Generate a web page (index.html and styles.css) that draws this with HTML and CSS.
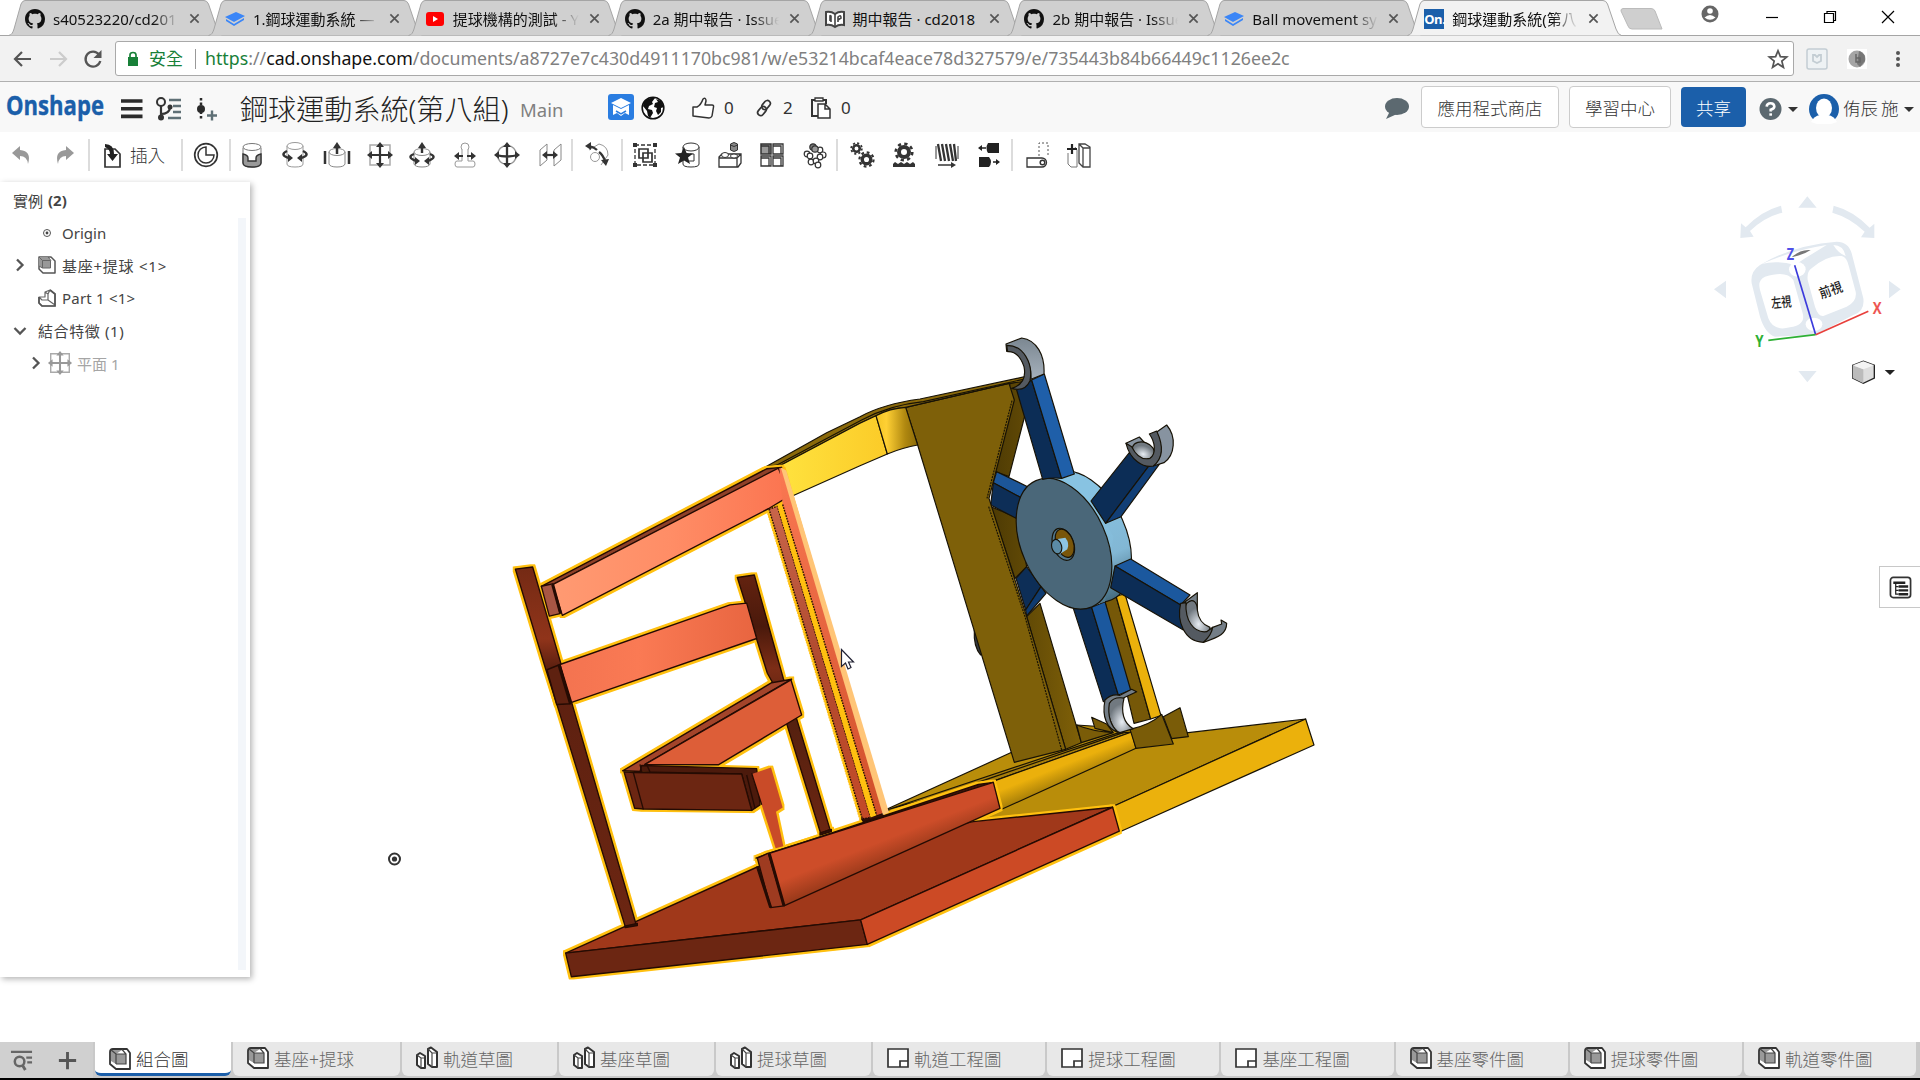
FILE: index.html
```html
<!DOCTYPE html>
<html lang="zh-Hant">
<head>
<meta charset="utf-8">
<title>鋼球運動系統(第八組)</title>
<link rel="stylesheet" href="styles.css">
</head>
<body>
<svg class="defs" width="0" height="0">
  <defs>
    <symbol id="tab-shape" viewBox="0 0 215 36"><path d="M.5 35.5C4 35 5 32 6 29L13 4Q14.500 .5 17 .5H196Q199 .5 200.500 4L209 29Q211 35 214.500 35.500"/></symbol>
    <symbol id="github" viewBox="0 0 16 16"><path d="M8 0C3.580 0 0 3.580 0 8c0 3.540 2.290 6.530 5.470 7.590.4.070.55-.17.55-.38 0-.19-.01-.82-.01-1.490-2.010.37-2.530-.49-2.690-.94-.09-.23-.48-.94-.82-1.130-.28-.15-.68-.52-.01-.53.63-.01 1.080.58 1.230.82.72 1.210 1.870.87 2.330.66.070-.52.28-.87.51-1.070-1.780-.2-3.640-.89-3.640-3.950 0-.87.31-1.590.82-2.150-.08-.2-.36-1.020.080-2.120 0 0 .67-.21 2.200.82.64-.18 1.320-.27 2-.27.68 0 1.360.09 2 .27 1.530-1.040 2.200-.82 2.200-.82.44 1.100.16 1.920.08 2.120.51.56.82 1.270.82 2.150 0 3.070-1.870 3.750-3.650 3.950.29.25.54.73.54 1.480 0 1.070-.01 1.930-.01 2.200 0 .21.15.46.55.38A8.013 8.013 0 0016 8c0-4.420-3.580-8-8-8z"/></symbol>
    <symbol id="stack" viewBox="0 0 20 20"><path d="M0 8 11 3 20 7 9 13Z" fill="#3b86f7"/><path d="M1 10v2l8 5 10-6V9L9 15Z" fill="#3b86f7"/></symbol>
    <symbol id="youtube" viewBox="0 0 20 20"><rect x="1" y="3" width="18" height="14" rx="3" fill="#f00"/><path d="M8 7v6l5-3Z" fill="#fff"/></symbol>
    <symbol id="book" viewBox="0 0 20 20"><path d="M1 3Q6 2 10 5 14 2 19 3V16Q14 15 10 18 6 15 1 16Z" fill="#fff" stroke="#444" stroke-width="2"/><path d="M10 5V17M5 12V7Q5 6 6 7V13M13 13V8Q16 5 16 9L13 11" fill="none" stroke="#444" stroke-width="1.600"/></symbol>
    <symbol id="close" viewBox="0 0 12 12"><path d="M1.500 1.500 10.500 10.500M10.500 1.500 1.500 10.500" stroke="#555" stroke-width="1.800"/></symbol>
    <symbol id="part" viewBox="0 0 24 24"><path d="M2 5Q2 2 5 2H19L22 6V22H8L2 17Z" fill="#fff" stroke="#333" stroke-width="1.800" stroke-linejoin="round"/><path d="M8 7H18V17H8L3 14V3H14Z" fill="#999"/><path d="M2.500 2.500 8 7H18M8 7V17M14 2.500 18 7V17H8" fill="none" stroke="#444" stroke-width="1.200"/></symbol>
    <symbol id="part-small" viewBox="0 0 20 20"><path d="M2 2V14L6 18H18V6L14 2H2Z" fill="#fff" stroke="#555" stroke-width="1.500" stroke-linejoin="round"/><path d="M2 2H11L14 5.500V13H5.500L2 11Z" fill="#999"/><path d="M2 2 5.500 5.500H13.500V13H5.500L2 11M5.500 5.500V13M11 2 14 5.500" fill="none" stroke="#666"/></symbol>
    <symbol id="sketch" viewBox="0 0 24 24"><path d="M2 9 5 7 10 10V22H6L2 19ZM13 3 16 1.500 22 6V21H17L13 18Z" fill="#fff" stroke="#333" stroke-width="2" stroke-linejoin="round"/><path d="M2 9 6 12H10M6 12V22M13 3 17 7H22M17 7V21" fill="none" stroke="#444" stroke-width="1.200"/></symbol>
    <symbol id="drawing" viewBox="0 0 24 24"><path d="M2 3H22V21H2Z" fill="#fff" stroke="#333" stroke-width="1.700"/><path d="M14 21V15H22" fill="none" stroke="#333" stroke-width="1.700"/></symbol>
    <symbol id="planar" viewBox="0 0 28 28"><path d="M4 4H24V24H4Z" fill="none" stroke="#aaa" stroke-width="1.500"/><path d="M14 3V25M3 14H25" stroke="currentColor" stroke-width="2.200"/><path d="M14 1 18 6H10ZM14 27 18 22H10ZM1 14 6 10V18ZM27 14 22 10V18Z" fill="currentColor"/></symbol>
    <symbol id="gear" viewBox="0 0 20 20"><circle cx="10" cy="10" r="5" fill="none" stroke="#333" stroke-width="4"/><circle cx="10" cy="10" r="8.300" fill="none" stroke="#333" stroke-width="2.600" stroke-dasharray="3.260"/></symbol>
  </defs>
</svg>

<header class="tabstrip">
  <div class="tab"><svg class="shape"><use href="#tab-shape"/></svg><svg class="fav"><use href="#github"/></svg><span class="tab-title">s40523220/cd201</span><svg class="x"><use href="#close"/></svg></div>
  <div class="tab"><svg class="shape"><use href="#tab-shape"/></svg><svg class="fav"><use href="#stack"/></svg><span class="tab-title">1.鋼球運動系統 —</span><svg class="x"><use href="#close"/></svg></div>
  <div class="tab"><svg class="shape"><use href="#tab-shape"/></svg><svg class="fav"><use href="#youtube"/></svg><span class="tab-title">提球機構的測試 - Y</span><svg class="x"><use href="#close"/></svg></div>
  <div class="tab"><svg class="shape"><use href="#tab-shape"/></svg><svg class="fav"><use href="#github"/></svg><span class="tab-title">2a 期中報告 · Issue</span><svg class="x"><use href="#close"/></svg></div>
  <div class="tab"><svg class="shape"><use href="#tab-shape"/></svg><svg class="fav"><use href="#book"/></svg><span class="tab-title whole">期中報告 · cd2018</span><svg class="x"><use href="#close"/></svg></div>
  <div class="tab"><svg class="shape"><use href="#tab-shape"/></svg><svg class="fav"><use href="#github"/></svg><span class="tab-title">2b 期中報告 · Issue</span><svg class="x"><use href="#close"/></svg></div>
  <div class="tab"><svg class="shape"><use href="#tab-shape"/></svg><svg class="fav"><use href="#stack"/></svg><span class="tab-title">Ball movement sy</span><svg class="x"><use href="#close"/></svg></div>
  <div class="tab active"><svg class="shape"><use href="#tab-shape"/></svg><span class="fav on">On.</span><span class="tab-title">鋼球運動系統(第八</span><svg class="x"><use href="#close"/></svg></div>
  <svg class="newtab" viewBox="0 0 44 22"><path d="M3 .5H31Q34 .5 35 3L42 21H12Q9 21 8 18L1 3Q.5 1 3 .5Z" fill="#cfcfcf" stroke="#bbb"/></svg>
  <div class="window-controls">
    <svg class="wc" viewBox="0 0 18 18"><circle cx="9" cy="9" r="8.500" fill="#666"/><circle cx="9" cy="6" r="2.800" fill="#fff"/><path d="M3.500 12.500Q9 7.500 14.500 12.500 9 17 3.500 12.500Z" fill="#fff"/></svg>
    <svg class="wc min" viewBox="0 0 18 18"><path d="M3 9.500H15" stroke="#000" stroke-width="1.200"/></svg>
    <svg class="wc" viewBox="0 0 18 18"><path d="M3.500 5.500H12.500V14.500H3.500ZM6 5.500V3.500H14.500V12.500H12.500" fill="none" stroke="#000" stroke-width="1.200"/></svg>
    <svg class="wc" viewBox="0 0 18 18"><path d="M3 3 15 15M15 3 3 15" stroke="#000" stroke-width="1.200"/></svg>
  </div>
</header>

<nav class="browser-bar">
  <svg class="nav" viewBox="0 0 24 24"><path d="M20 12H5M11 5 4 12 11 19" fill="none" stroke="#555" stroke-width="2.200"/></svg>
  <svg class="nav" viewBox="0 0 24 24"><path d="M4 12H19M13 5 20 12 13 19" fill="none" stroke="#ccc" stroke-width="2.200"/></svg>
  <svg class="nav" viewBox="0 0 24 24"><path d="M18 7.500A7.500 7.500 0 1 0 19.300 14" fill="none" stroke="#555" stroke-width="2.300"/><path d="M20.500 3V11H12.500Z" fill="#555"/></svg>
  <div class="omnibox">
    <svg class="lock" viewBox="0 0 12 16"><path d="M1 6H11V15H1Z" fill="#188038"/><path d="M3 7V4Q3 1.500 6 1.500T9 4V7" fill="none" stroke="#188038" stroke-width="1.700"/></svg>
    <span class="secure">安全</span><i class="omni-sep"></i>
    <span class="url"><b class="scheme">https</b>://<b class="host">cad.onshape.com</b>/documents/a8727e7c430d4911170bc981/w/e53214bcaf4eace78d327579/e/735443b84b66449c1126ee2c</span>
    <svg class="star" viewBox="0 0 24 24"><path d="M12 3 14.600 9.400 21.500 9.900 16.200 14.300 17.900 21 12 17.300 6.100 21 7.800 14.300 2.500 9.900 9.400 9.400Z" fill="none" stroke="#555" stroke-width="1.900"/></svg>
  </div>
  <svg class="ext" viewBox="0 0 22 22"><rect x="1" y="1" width="20" height="20" rx="2" fill="#eef2f4" stroke="#c3cdd3" stroke-width="1.500"/><path d="M7 7H9L11 9 13 7H15V13L11 15 7 13Z" fill="none" stroke="#c3cdd3" stroke-width="1.800"/></svg>
  <svg class="ext second" viewBox="0 0 22 22"><rect x="1" y="1" width="20" height="20" fill="#fff"/><circle cx="11" cy="11" r="8.500" fill="#a5a5a5"/><path d="M13 3Q20 5 19 13L14 19 11 16Z" fill="#777"/><path d="M10 6V14H14V10H10" fill="none" stroke="#666" stroke-width="1.500"/></svg>
  <svg class="dots" viewBox="0 0 6 18"><circle cx="3" cy="3" r="2"/><circle cx="3" cy="9" r="2"/><circle cx="3" cy="15" r="2"/></svg>
</nav>

<section class="doc-header">
  <svg class="logo" viewBox="0 0 100 46"><text x="0" y="31" textLength="98" lengthAdjust="spacingAndGlyphs">Onshape</text></svg>
  <svg class="burger" viewBox="0 0 22 20"><path d="M0 2H21.500M0 9.700H21.500M0 17.400H21.500" stroke="#2b2b2b" stroke-width="3.600"/></svg>
  <svg class="versions" viewBox="0 0 26 24"><circle cx="5" cy="5" r="4" fill="none" stroke="#333" stroke-width="2"/><path d="M5 9V20M5 17Q13 17 14 11" fill="none" stroke="#333" stroke-width="2.200"/><circle cx="14" cy="10" r="2.500" fill="#333"/><circle cx="5" cy="20.500" r="3" fill="#333"/><path d="M13 3H25M17 9H25M17 15H25M12 21H25" stroke="#5f7076" stroke-width="2.400"/></svg>
  <svg class="mark" viewBox="0 0 22 24"><circle cx="5" cy="12" r="4" fill="#2b2b2b"/><path d="M5 1V23" stroke="#2b2b2b" stroke-width="2.500" stroke-dasharray="2.500 2"/><path d="M11 18.500H21M16 13.500V23.500" stroke="#5f7076" stroke-width="2.400"/></svg>
  <h1>鋼球運動系統(第八組)</h1>
  <span class="workspace">Main</span>
  <svg class="edu" viewBox="0 0 26 26"><rect width="26" height="26" rx="3" fill="#2a7de1"/><path d="M13 4 23 9 13 14 3 9Z" fill="#fff"/><path d="M5 11V21L9 19 13 22 17 19 21 21V11L13 15Z" fill="#fff"/><path d="M8 17 13 20 18 17" fill="none" stroke="#2a7de1" stroke-width="1.500"/></svg>
  <svg class="globe" viewBox="0 0 24 24"><circle cx="12" cy="12" r="10.800" fill="#fff" stroke="#111" stroke-width="1.600"/><path d="M3 6Q8 1 14 2L11 6 12 8 8 10 7 13 11 14 12 17 9 22 7 20 6 15 2 10ZM15 3 20 5 23 11 20 12 20 16 17 19 15 15 16 12 13 11 14 7 17 6Z" fill="#111"/></svg>
  <div class="stat"><svg class="i24" viewBox="0 0 24 24"><path d="M2 11H6Q10 9 12 3Q15 1 15 5L14 9H21Q23 9 22.500 11L21 20Q20 22 18 22L10 21 2 20Z" fill="#fff" stroke="#333" stroke-width="1.500" stroke-linejoin="round"/></svg>0</div>
  <div class="stat link"><svg class="i18" viewBox="0 0 18 18"><rect x="8" y="1" width="6" height="10" rx="3" transform="rotate(40 11 6)" fill="none" stroke="#333" stroke-width="1.700"/><rect x="4" y="7" width="6" height="10" rx="3" transform="rotate(40 7 12)" fill="none" stroke="#333" stroke-width="1.700"/></svg>2</div>
  <div class="stat clip"><svg class="i22" viewBox="0 0 22 24"><path d="M8 20H2V4H16V8" fill="none" stroke="#333" stroke-width="2"/><path d="M5 2H13V5H5Z" fill="#fff" stroke="#333" stroke-width="1.300"/><path d="M8 8H15L20 13V22H8ZM15 8V13H20" fill="#fff" stroke="#333" stroke-width="1.500"/></svg>0</div>
  <div class="header-right">
    <svg class="bubble" viewBox="0 0 26 24"><ellipse cx="13" cy="9.500" rx="12" ry="8.500" fill="#5c6970"/><path d="M6 14 2 22 13 17Z" fill="#5c6970"/></svg>
    <button class="btn store">應用程式商店</button>
    <button class="btn learn">學習中心</button>
    <button class="btn share">共享</button>
    <svg class="help" viewBox="0 0 24 24"><circle cx="12" cy="12" r="11.500" fill="#5c6970"/><path d="M8 9.500Q8.300 6 12 6T16 9.300Q16 11.500 12.200 12.800V14.500" fill="none" stroke="#fff" stroke-width="2.700"/><path d="M10.800 16.500H13.600V19H10.800Z" fill="#fff"/></svg>
    <i class="caret"></i>
    <svg class="avatar" viewBox="0 0 30 30"><circle cx="15" cy="15" r="15" fill="#1b5faa"/><ellipse cx="15" cy="14" rx="8" ry="9.500" fill="#fff"/><path d="M2 28Q5 22 11 21H19Q25 22 28 28L22 30H8Z" fill="#fff"/></svg>
    <span class="user">侑辰 施</span><i class="caret"></i>
  </div>
</section>

<section class="toolbar">
  <svg class="tool undo" viewBox="0 0 28 28"><path d="M4 12 12 5V9Q24 10 20 23 19 15 12 15V19Z" fill="#999"/></svg>
  <svg class="tool redo" viewBox="0 0 28 28"><path d="M24 12 16 5V9Q4 10 8 23 9 15 16 15V19Z" fill="#999"/></svg>
  <i class="sep"></i>
  <div class="insert"><svg viewBox="0 0 28 28"><path d="M7 8H17L22 13V26H7Z" fill="#fff" stroke="#333" stroke-width="1.700"/><path d="M7 3Q16 3 16 13H20L14.500 20 9 13H12Q12 8 7 6Z" fill="#222"/></svg>插入</div>
  <i class="sep"></i>
  <svg class="tool clock" viewBox="0 0 28 28"><circle cx="14" cy="14" r="11.300" fill="none" stroke="#333" stroke-width="1.700"/><path d="M14 6A8 8 0 1 0 22 14H14Z" fill="none" stroke="#333" stroke-width="1.500"/></svg>
  <i class="sep"></i>
  <div class="group first">
    <svg class="tool" viewBox="0 0 28 28"><path d="M5 7V22Q5 26 14 26T23 22V7" fill="#fff" stroke="#777"/><path d="M5 13Q10 14 10 17V20H18V17Q18 14 23 13V22Q23 26 14 26T5 22Z" fill="#999" stroke="#333" stroke-width="1.400"/><ellipse cx="14" cy="6" rx="9" ry="3.500" fill="#fff" stroke="#777"/></svg>
    <svg class="tool" viewBox="0 0 28 28"><path d="M6 5V23Q6 26 14 26T22 23V5" fill="#fff" stroke="#999"/><ellipse cx="14" cy="5" rx="8" ry="3.500" fill="#fff" stroke="#999"/><path d="M6 10Q-2 14 8 17M22 10Q30 14 20 17" fill="none" stroke="#333" stroke-width="2.500"/><path d="M7 13 12 17 7 21ZM21 13 16 17 21 21Z" fill="#333"/></svg>
    <svg class="tool" viewBox="0 0 28 28"><path d="M6 11V23Q7 26 14 26T22 23V11" fill="#fff" stroke="#888"/><ellipse cx="14" cy="11" rx="8" ry="3.500" fill="#fff" stroke="#888"/><path d="M2 10V23M26 10V23M14 13V5" stroke="#333" stroke-width="2.500"/><path d="M14 1 18 7H10Z" fill="#333"/></svg>
    <svg class="tool"><use href="#planar"/></svg>
    <svg class="tool" viewBox="0 0 28 28"><path d="M6 11V23Q7 26 14 26T22 23V11" fill="#fff" stroke="#888"/><ellipse cx="14" cy="11" rx="8" ry="3.500" fill="#fff" stroke="#888"/><path d="M14 12V5M6 13Q-2 16 8 20M22 13Q30 16 20 20" fill="none" stroke="#333" stroke-width="2.400"/><path d="M14 1 18 7H10ZM7 16 12 20 7 24ZM21 16 16 20 21 24Z" fill="#333"/></svg>
    <svg class="tool" viewBox="0 0 28 28"><circle cx="14" cy="6" r="4" fill="#fff" stroke="#999"/><path d="M11 9V20H6Q4 20 4 23T6 26H22Q24 26 24 23T22 20H17V9" fill="#fff" stroke="#999"/><path d="M12 15H6M16 15H22" stroke="#333" stroke-width="2.200"/><path d="M3 15 8 11V19ZM25 15 20 11V19Z" fill="#333"/></svg>
    <svg class="tool" viewBox="0 0 28 28"><circle cx="14" cy="14" r="9.500" fill="none" stroke="#999" stroke-width="1.400"/><path d="M14 3V25M3 14Q14 17 25 14" fill="none" stroke="#333" stroke-width="2.300"/><path d="M14 1 18 6H10ZM14 27 18 22H10ZM1 14 6 10V18ZM27 14 22 10V18Z" fill="#333"/></svg>
    <svg class="tool" viewBox="0 0 28 28"><path d="M4 9 11 3V19L4 25ZM18 9 25 3V19L18 25Z" fill="none" stroke="#888"/><path d="M8 14H20" stroke="#333" stroke-width="2.200"/><path d="M6 14 11 10V18ZM22 14 17 10V18Z" fill="#333"/></svg>
  </div>
  <i class="sep"></i>
  <svg class="tool tangent" viewBox="0 0 28 28"><circle cx="12" cy="16" r="4.500" fill="#fff" stroke="#999"/><path d="M6 9 16 3Q25 5 25 14L18 24" fill="none" stroke="#999"/><path d="M6 5Q11 6 14 9M16 11Q20 14 22 20" fill="none" stroke="#333" stroke-width="2.200"/><path d="M2 5 8 1 8 9ZM18 19 26 18 23 25Z" fill="#333"/></svg>
  <i class="sep"></i>
  <div class="group second-group">
    <svg class="tool" viewBox="0 0 28 28"><path d="M4 4H24V24H4Z" fill="none" stroke="#333" stroke-dasharray="4 2" stroke-width="1.300"/><path d="M2 2H6V6H2ZM22 2H26V6H22ZM2 22H6V26H2ZM22 22H26V26H22Z" fill="#333"/><path d="M8 8H17V17H8ZM12 12H21V21H12Z" fill="#fff" stroke="#333" stroke-width="1.700"/></svg>
    <svg class="tool" viewBox="0 0 28 28"><path d="M9 6V23Q9 26 17 26T25 23V6" fill="#fff" stroke="#333"/><ellipse cx="17" cy="6" rx="8" ry="4" fill="#fff" stroke="#333"/><path d="M16 13H20V20H15" fill="none" stroke="#333"/><path d="M10 6 12.600 12 19 12.500 14 16.500 16 23 10 19.500 4 23 6 16.500 1 12.500 7.400 12Z" fill="#222"/></svg>
    <svg class="tool" viewBox="0 0 28 28"><path d="M3 16 6 13H25V22L22 26H3ZM3 17H21V26M21 17 25 13" fill="#fff" stroke="#333" stroke-width="1.300"/><ellipse cx="9" cy="14" rx="3.500" ry="2.500" fill="#fff" stroke="#333"/><ellipse cx="18" cy="15" rx="3.500" ry="2" fill="#fff" stroke="#333"/><path d="M14.500 3Q18 0 21.500 3V9Q18 12 14.500 9Z" fill="#888" stroke="#333"/><path d="M14.500 4Q18 7 21.500 4" fill="none" stroke="#333"/></svg>
    <svg class="tool" viewBox="0 0 28 28"><path d="M3 3H13V13H3Z" fill="#999" stroke="#333" stroke-width="1.500"/><path d="M15 3H25V13H15ZM3 15H13V25H3ZM15 15H25V25H15ZM3 5H11V13M15 5H23V13M3 17H11V25M15 17H23V25" fill="none" stroke="#333" stroke-width="1.300"/></svg>
    <svg class="tool" viewBox="0 0 28 28"><g fill="#fff" stroke="#333" stroke-width="1.200"><circle cx="6" cy="13" r="2.800"/><circle cx="9" cy="15" r="2.800"/><circle cx="19" cy="9" r="2.800"/><circle cx="22" cy="14" r="3"/><circle cx="19" cy="16" r="2.800"/><circle cx="10" cy="21" r="2.800"/><circle cx="15" cy="20" r="2.800"/><circle cx="17" cy="24" r="2.800"/><circle cx="12" cy="6" r="3.200" fill="#777"/><circle cx="14" cy="8" r="3.200" fill="#999"/></g></svg>
  </div>
  <i class="sep"></i>
  <div class="group four">
    <svg class="tool" viewBox="0 0 28 28"><use href="#gear" x="2" y="1" width="13" height="13"/><use href="#gear" x="10" y="10" width="17" height="17"/></svg>
    <svg class="tool" viewBox="0 0 28 28"><use href="#gear" x="4" y="1" width="20" height="20"/><path d="M3 26V23L5 21 8 23 11 21 14 23 17 21 20 23 23 21 25 23V26Z" fill="#333"/></svg>
    <svg class="tool" viewBox="0 0 28 28"><path d="M3 5V18M25 5V18" stroke="#333"/><path d="M5 3 8 20M9 3 12 20M13 3 16 20M17 3 20 20M21 3 23 20" stroke="#333" stroke-width="2.300"/><path d="M5 24H20" stroke="#333" stroke-width="1.500"/><path d="M18 21 23 24 18 27Z" fill="#333"/></svg>
    <svg class="tool" viewBox="0 0 28 28"><path d="M13 2H24V12H13Q10 7 13 2ZM4 16H14Q18 21 14 26H4Z" fill="#222"/><path d="M6 7H11M18 21H22" stroke="#222" stroke-width="1.500"/><path d="M3 7 7 4V10ZM25 21 21 18V24Z" fill="#222"/></svg>
  </div>
  <i class="sep"></i>
  <svg class="tool last" viewBox="0 0 28 28"><path d="M16 15V2H25V16" fill="none" stroke="#555" stroke-dasharray="2 2"/><path d="M4 17H19A4.500 4.500 0 1 1 19 26H4Z" fill="#fff" stroke="#333" stroke-width="1.300"/><circle cx="19.500" cy="21.500" r="2.300" fill="none" stroke="#333" stroke-width="1.500"/></svg>
  <svg class="tool last" viewBox="0 0 28 28"><path d="M3 12V23L6 26H12V9L10 6" fill="#fff" stroke="#777"/><path d="M14 3H20L25 6V26H18L14 22ZM14 3 18 7H25M18 7V26" fill="#fff" stroke="#444" stroke-width="1.300"/><path d="M7 3V13M2 8H12" stroke="#222" stroke-width="2.200"/></svg>
</section>

<main class="workspace-area">
  <aside class="panel">
    <div class="row heading">實例 <b>(2)</b></div>
    <div class="row lvl2"><svg class="origin" viewBox="0 0 10 10"><circle cx="5" cy="5" r="3.500" fill="none" stroke="#555"/><circle cx="5" cy="5" r="1.400" fill="#444"/></svg>Origin</div>
    <div class="row lvl1"><svg class="chev" viewBox="0 0 10 14"><path d="M2 1.500 7.500 7 2 12.500" fill="none" stroke="#555" stroke-width="2.300"/></svg><svg class="node"><use href="#part-small"/></svg><span class="asm">基座+提球 &lt;1&gt;</span></div>
    <div class="row lvl1"><i class="chev"></i><svg class="node" viewBox="0 0 20 20"><path d="M2 9H8V4L13 2 18 6V18H5L2 15ZM2 9 5 12H11L18 17M8 4 11 6V12M11 6 13 2" fill="#fff" stroke="#666" stroke-width="1.200" stroke-linejoin="round"/><path d="M2 9V15L5 18H18V6L13 2" fill="none" stroke="#555" stroke-width="1.700"/></svg><span>Part 1 &lt;1&gt;</span></div>
    <div class="row group-row"><svg class="chev down" viewBox="0 0 14 10"><path d="M1.500 2 7 7.500 12.500 2" fill="none" stroke="#555" stroke-width="2.300"/></svg><span class="asm">結合特徵 (1)</span></div>
    <div class="row mate"><svg class="chev" viewBox="0 0 10 14"><path d="M2 1.500 7.500 7 2 12.500" fill="none" stroke="#555" stroke-width="2.300"/></svg><svg class="mate-icon"><use href="#planar"/></svg>平面 1</div>
    <i class="scroll"></i>
  </aside>

  <svg class="scene" viewBox="250 180 1670 862">
    <defs>
      <filter id="outline" x="-5%" y="-5%" width="110%" height="110%" color-interpolation-filters="sRGB"><feMorphology in="SourceAlpha" operator="dilate" radius="6.500" result="d"/><feFlood flood-color="#ffc010"/><feComposite in2="d" operator="in" result="o"/><feMerge><feMergeNode in="o"/><feMergeNode in="SourceGraphic"/></feMerge></filter>
      <linearGradient id="y1"><stop offset="0" stop-color="#ffe23e"/><stop offset="1" stop-color="#fbcb28"/></linearGradient>
      <linearGradient id="y2"><stop offset="0" stop-color="#f3c424"/><stop offset=".25" stop-color="#ffd034"/><stop offset=".7" stop-color="#b08810"/><stop offset="1" stop-color="#8b6a08"/></linearGradient>
      <linearGradient id="y3" gradientUnits="userSpaceOnUse" x1="600" y1="1315" x2="628" y2="1385"><stop offset=".3" stop-color="#ebb00c"/><stop offset="1" stop-color="#a87f08"/></linearGradient>
      <linearGradient id="brown"><stop offset="0" stop-color="#4d3a04"/><stop offset="1" stop-color="#806108"/></linearGradient>
      <linearGradient id="rim" x1="0" y1="0" x2="0" y2="1"><stop offset=".2" stop-color="#88c3e2"/><stop offset=".7" stop-color="#82b7d4"/><stop offset="1" stop-color="#456c80"/></linearGradient>
      <linearGradient id="steel" x1="0" y1="0" x2="0" y2="1"><stop offset="0" stop-color="#7b8791"/><stop offset="1" stop-color="#a6b1bc"/></linearGradient>
      <radialGradient id="ball" cx=".55" cy=".7"><stop offset="0" stop-color="#e8edf3"/><stop offset="1" stop-color="#717980"/></radialGradient>
      <linearGradient id="o1"><stop offset="0" stop-color="#ff9a72"/><stop offset=".5" stop-color="#ff8d66"/><stop offset="1" stop-color="#fb7450"/></linearGradient>
      <linearGradient id="o2"><stop offset="0" stop-color="#f37350"/><stop offset=".4" stop-color="#fa7a54"/><stop offset="1" stop-color="#e86540"/></linearGradient>
      <linearGradient id="o3" gradientUnits="userSpaceOnUse" x1="1150" y1="1080" x2="1195" y2="1200"><stop offset=".45" stop-color="#cd4d29"/><stop offset="1" stop-color="#963819"/></linearGradient>
      <linearGradient id="rail" x1="0" y1="0" x2="0" y2="1"><stop offset="0" stop-color="#c8654a"/><stop offset=".5" stop-color="#b04a2e"/><stop offset="1" stop-color="#c44a28"/></linearGradient>
      <linearGradient id="rail2" x1="0" y1="0" x2="0" y2="1"><stop offset="0" stop-color="#fa7852"/><stop offset="1" stop-color="#d04f2a"/></linearGradient>
      <linearGradient id="post" x1="0" y1="0" x2="0" y2="1"><stop offset="0" stop-color="#742a14"/><stop offset=".2" stop-color="#90341a"/><stop offset=".28" stop-color="#5c2010"/><stop offset="1" stop-color="#6c2612"/></linearGradient>
      <linearGradient id="mid" x1="0" y1="0" x2="0" y2="1"><stop offset="0" stop-color="#642310"/><stop offset=".2" stop-color="#4a190b"/><stop offset=".36" stop-color="#7c2d16"/><stop offset=".55" stop-color="#54200f"/><stop offset="1" stop-color="#6c2612"/></linearGradient>
    </defs>

    <g class="edges" transform="translate(860 320) scale(.33333)">
      <path d="M75 1470 455 1297 650 1215 985 1238 1337 1197 757 1460 340 1505Z" fill="#b98d0a"/>
      <path d="M1337 1197 1362 1275 780 1535 757 1460Z" fill="#ebb10c"/>
      <path d="M343 930Q340 980 362 1005L375 1000 350 920Z" fill="#343a42"/>
      <path d="M450 190 505 178 495 285 447 470 405 455ZM393 560 475 595 500 740 465 775ZM500 890 540 850 664 1268 617 1288Z" fill="url(#brown)"/>
      <path d="M735 845 768 828 872 1197 822 1210Z" fill="#765808"/>
      <path d="M768 828 795 822 903 1187 872 1197Z" fill="#ebb10c"/>
      <path d="M650 1215Q700 1235 760 1238L664 1268ZM695 1192 740 1212 760 1238 705 1225ZM910 1190 960 1163 985 1250 935 1256Z" fill="#7a5c08"/>
      <path d="M410 455 503 500 483 533 400 488Z" fill="#1c5699"/><path d="M400 488 483 533 468 595 392 555ZM468 775 500 740 543 800 497 870Z" fill="#0d2e57"/><path d="M497 870 543 800 558 820 500 888Z" fill="#0f3b70"/>
      <path d="M137 262 447 190 463 240 387 535 500 890 617 1288 463 1327 173 375Z" fill="#7e6009"/>
      <path d="M456 242 381 535M386 560 495 890 605 1290" fill="none" stroke-dasharray="6 3"/>
      <path d="M-280 439-100 338 0 290Q70 252 180 237L495 170 515 182 447 190 137 262Q90 265 48 287L0 310-235 434Z" fill="#8a690a"/>
      <path d="M-250 436-90 350 5 300Q90 255 190 245L490 178" fill="none"/>
      <path d="M-235 434 0 310 48 287 82 402 0 437-203 528Z" fill="url(#y1)"/>
      <path d="M48 287Q90 265 137 262L173 375Q130 382 82 402Z" fill="url(#y2)"/>
      <path d="M80 1470 770 1240 815 1236 405 1382 340 1398Z" fill="#a87f0a"/>
      <path d="M345 1390 790 1238" fill="none"/>
      <path d="M405 1382 815 1236 828 1285 425 1468Z" fill="url(#y3)"/>
      <path d="M810 1228Q870 1215 905 1183L940 1272 828 1285Z" fill="#7a5c08"/>
      <path d="M640 865 695 862 775 1125 730 1145Z" fill="#0c2d56"/><path d="M695 862 735 845 812 1110 775 1125Z" fill="#1b589e"/>
      <ellipse cx="671" cy="650" rx="127" ry="207" transform="rotate(-24 671 650)" fill="url(#rim)"/>
      <path d="M560 480 645 457 760 650 735 845 665 867Z" fill="url(#rim)" stroke="none"/>
      <path d="M693 543 808 398 865 440 737 610Z" fill="#0c2d56"/><path d="M865 440 900 430 783 590 737 610Z" fill="#123f76"/>
      <path d="M765 738 812 717 990 825 962 855Z" fill="#1b589e"/><path d="M765 738 962 855 970 930 752 803Z" fill="#0c2d56"/>
      <ellipse cx="612" cy="671" rx="127" ry="207" transform="rotate(-24 612 671)" fill="#4a6779"/>
      <path d="M470 210 515 180 605 475Q575 472 548 478Z" fill="#0c2d56"/><path d="M515 180 553 162 643 462 605 475Z" fill="#1f5fa9"/>
      <ellipse cx="610" cy="673" rx="31" ry="50" transform="rotate(-20 610 673)" fill="#52788d"/><ellipse cx="614" cy="670" rx="26" ry="44" transform="rotate(-20 614 670)" fill="#79560a"/>
      <path d="M588 658 616 653Q630 670 622 688L600 702Z" fill="#8dc5e2" stroke="none"/><ellipse cx="590" cy="680" rx="15" ry="22" transform="rotate(-15 590 680)" fill="#5b8ba5"/>
      <path d="M438 72 485 54C530 60 555 105 552 162L513 178C515 120 485 80 440 94Z" fill="url(#steel)"/>
      <path d="M440 76C490 75 520 130 510 182 500 205 480 212 455 205 490 195 498 170 492 140 480 105 460 94 443 95Z" fill="#545a61"/>
      <path d="M885 340 920 315C950 350 945 405 912 428L880 438C910 410 905 370 885 340Z" fill="#8793a0"/>
      <path d="M798 370 838 351 860 375 830 400Z" fill="#8793a0"/>
      <ellipse cx="850" cy="392" rx="34" ry="25" transform="rotate(20 850 392)" fill="url(#ball)"/>
      <path d="M868 342 890 333C905 365 915 410 880 438 850 445 810 420 798 370L815 380C830 410 850 420 870 415 890 400 885 365 868 342Z" fill="#545a61"/>
      <path d="M962 855 1012 818V870L980 862Z" fill="#747e87"/>
      <path d="M980 850C1000 830 1012 850 1012 870 1015 900 1030 915 1050 922 1050 950 1000 950 985 925 972 900 970 865 980 850Z" fill="url(#ball)"/>
      <path d="M962 850C950 900 970 965 1030 967L1050 955 1058 922 1040 935C1000 940 975 900 978 848Z" fill="#545a61"/>
      <path d="M1058 922 1085 912 1083 900 1100 910C1100 940 1080 950 1030 967Q1055 945 1058 922Z" fill="#747e87"/>
      <path d="M745 1150C760 1125 785 1128 792 1135 782 1175 790 1210 820 1226L780 1238C755 1230 740 1180 745 1150Z" fill="url(#ball)"/>
      <path d="M735 1140Q755 1120 780 1126L815 1108 830 1115 790 1134Q760 1130 748 1150C742 1190 755 1220 775 1238 740 1225 725 1190 735 1140Z" fill="#747e87"/>
    </g>

    <g class="edges orange" transform="translate(500 440) scale(.33333 .35077)" filter="url(#outline)">
      <path d="M197 1463 770 1218 1420 1088 1838 1047 1082 1368Z" fill="#a0381a"/>
      <path d="M197 1463 1082 1368 1102 1438 214 1530Z" fill="#6c2612"/>
      <path d="M1082 1368 1838 1047 1858 1115 1102 1438Z" fill="#cc4a25"/>
      <path d="M124 417 800 82 845 78 158 412Z" fill="#8e4028"/>
      <path d="M124 417 158 410 180 495 148 502Z" fill="#a85644"/>
      <path d="M46 368 98 362 182 635 218 758 408 1380 376 1388 172 758 136 650Z" fill="url(#post)"/>
      <path d="M158 412 835 80 868 160 805 196 187 500Z" fill="url(#o1)"/>
      <path d="M158 412 182 495" stroke-width="9"/>
      <path d="M712 392 763 385 850 680 890 795 990 1110 962 1122 862 815 817 690 802 665Z" fill="url(#mid)"/>
      <path d="M180 640 690 470 740 465 770 566 215 748Z" fill="url(#o2)"/>
      <path d="M141 655 180 640 212 752 170 754Z" fill="#5e2110"/>
      <path d="M176 640 211 752" stroke-width="8"/>
      <path d="M368 943 815 692 875 682 435 925 425 945Z" fill="#a3442a"/>
      <path d="M435 925 873 684 905 784 655 926Z" fill="#dd5e38"/>
      <path d="M425 928 770 937 780 1040 755 1056 725 952 420 946Z" fill="#4c1a0c"/>
      <path d="M372 946 400 948 725 952 755 1056 430 1052 404 1050Z" fill="#6c2612"/>
      <path d="M400 948 430 1053M740 955 765 1050M420 925 425 946M440 925 450 946" fill="none"/>
      <path d="M755 952 813 934 848 1048 828 1060 850 1158 827 1164 785 1040Z" fill="#c94b28" stroke="none"/>
      <path d="M755 950 785 1040" fill="none"/>
      <path d="M768 1192 1435 982 1480 976 808 1178Z" fill="#4a1a0c"/>
      <path d="M772 1192 805 1178 852 1328 812 1333Z" fill="#9e3b20"/>
      <path d="M808 1178 1480 976 1500 1050 852 1328Z" fill="url(#o3)"/>
      <path d="M772 1215 812 1333M808 1180 852 1328" stroke-width="9"/>
      <path d="M1085 1080 1128 1070 1150 1064 1150 1074 1090 1088ZM960 1120 994 1110 994 1116 960 1126ZM374 1386 412 1378V1384L376 1390Z" fill="#32100a"/>
      <path d="M807 197 832 189 1112 1076 1087 1080Z" fill="url(#rail)" stroke-dasharray="5 3"/>
      <path d="M832 187 848 184 1130 1070 1112 1076Z" fill="#ffc010" stroke="none"/>
      <path d="M838 80 850 82 1150 1063 1130 1070 848 184Z" fill="url(#rail2)" stroke="none"/>
      <path d="M848 184 1130 1070" stroke-dasharray="5 3"/>
    </g>
    <path d="M780.800 467.500 786.300 470.500 889 812.500 883 815Z" fill="#ffc577"/>
    <path d="M841.500 649.500V666.500L845.500 663 848 669 851 667.500 848.500 662H853.500Z" fill="#fff" stroke="#223" stroke-width="1.200"/>
    <circle cx="394.500" cy="859" r="5.500" fill="#fff" stroke="#333" stroke-width="2"/><circle cx="394.500" cy="859" r="2.600" fill="#333"/>

    <g transform="translate(1680 170) scale(.33333)">
      <g fill="#e2e9f0"><path d="M382 79 410 113H355ZM382 637 410 603H355ZM102 358 138 332V385ZM662 358 627 332V385ZM303 107 307 128Q255 140 210 183L221 200 181 204 183 160 197 172Q245 122 303 107ZM461 107 457 128Q510 143 554 185L543 202 583 204 583 161 569 173Q520 122 461 107Z"/>
      <path d="M240 285Q340 225 470 215 505 215 515 250L550 385Q555 425 520 435L405 495 285 500Q255 490 240 440L215 340Q210 305 240 285Z"/></g>
      <g fill="#fff"><path d="M245 282Q340 240 440 225L375 265 345 285Q290 270 245 282ZM255 320Q320 300 340 330L368 430Q378 465 330 472 280 485 265 445L240 360Q232 330 255 320ZM395 295Q440 255 485 258 500 260 507 290L527 365Q532 395 500 410L430 438Q415 440 405 410L383 330Q380 305 395 295ZM460 225Q490 225 497 258 475 250 460 225Z"/><ellipse cx="352" cy="298" rx="25" ry="22"/><ellipse cx="402" cy="463" rx="25" ry="20"/></g>
      <path d="M335 262Q360 237 392 240 370 255 335 262Z" fill="#777"/>
      <text class="face" transform="translate(275 415) rotate(-6) scale(.85 1.150)">左視</text>
      <text class="face" transform="translate(424 386) rotate(-20) scale(.98 1.150)">前視</text>
      <path d="M407 494 344 286" stroke="#3b3bdc" stroke-width="5"/><path d="M407 494 265 511" stroke="#2eb035" stroke-width="5"/><path d="M407 494 565 424" stroke="#e8403c" stroke-width="5"/>
      <text class="axis z" transform="translate(320 269) scale(.95 1.200)">Z</text><text class="axis ya" transform="translate(226 532) scale(1 1.200)">Y</text><text class="axis xa" transform="translate(578 431) scale(1 1.200)">X</text>
      <path d="M518 586 550 574 583 586V624L550 640 518 624Z" fill="#ddd" stroke="#222" stroke-width="4"/><path d="M518 586 550 598V640L518 624Z" fill="#bbb"/><path d="M518 586 550 574 583 586 550 598Z" fill="#f4f4f4"/>
      <path d="M614 600H645L630 615Z" fill="#222"/>
    </g>
  </svg>
  <button class="side-tab"><svg viewBox="0 0 24 24"><rect x="1.500" y="1.500" width="21" height="21" rx="3" fill="#fff" stroke="#333" stroke-width="1.800"/><path d="M4.500 7H17M10 11H20M10 15H20M10 19H20" stroke="#222" stroke-width="2.600"/><path d="M7 7V19H10M7 11H10M7 15H10" fill="none" stroke="#222" stroke-width="1.300"/></svg></button>
</main>

<footer class="doc-tabs">
  <div class="tab-tools"><svg viewBox="0 0 24 24"><path d="M1 3H23M17 9H23M18 14H23" stroke="#666" stroke-width="2.200"/><circle cx="10" cy="13" r="5" fill="none" stroke="#666" stroke-width="2.600"/><path d="M13 17 16 22" stroke="#666" stroke-width="3"/></svg><svg viewBox="0 0 24 24"><path d="M12 3V21M3 12H21" stroke="#555" stroke-width="3"/></svg></div>
  <div class="doc-tab current"><svg><use href="#part"/></svg>組合圖</div>
  <div class="doc-tab base"><svg><use href="#part"/></svg>基座+提球</div>
  <div class="doc-tab sk"><svg><use href="#sketch"/></svg>軌道草圖</div>
  <div class="doc-tab sk"><svg><use href="#sketch"/></svg>基座草圖</div>
  <div class="doc-tab sk"><svg><use href="#sketch"/></svg>提球草圖</div>
  <div class="doc-tab"><svg><use href="#drawing"/></svg>軌道工程圖</div>
  <div class="doc-tab"><svg><use href="#drawing"/></svg>提球工程圖</div>
  <div class="doc-tab"><svg><use href="#drawing"/></svg>基座工程圖</div>
  <div class="doc-tab"><svg><use href="#part"/></svg>基座零件圖</div>
  <div class="doc-tab"><svg><use href="#part"/></svg>提球零件圖</div>
  <div class="doc-tab"><svg><use href="#part"/></svg>軌道零件圖</div>
</footer>
</body>
</html>
```
FILE: styles.css
```css
* { box-sizing: border-box; }
body {
  margin: 0; width: 1920px; height: 1080px; overflow: hidden;
  display: flex; flex-direction: column; background: #fff; color: #333;
  font-family: "Noto Sans", "Noto Sans CJK TC", sans-serif; font-size: 16px;
}
svg { flex: none; display: block; }
.defs { position: absolute; }

/* browser tabs */
.tabstrip { height: 36px; display: flex; padding-left: 8px; border-bottom: 1px solid #a5a5a5; flex: none; }
.tab { position: relative; width: 214.900px; height: 36px; margin-right: -15px; display: flex; align-items: center; padding: 1px 0 0 17px; flex: none; color: #111; font-size: 15px; }
.shape { position: absolute; left: 0; top: 0; width: 215px; height: 36px; fill: #d0d0d0; stroke: #a5a5a5; }
.active { z-index: 1; }
.active .shape { fill: #f2f2f2; }
.fav { position: relative; width: 20px; height: 20px; margin-right: 8px; fill: #111; }
.on { background: #1b5faa; color: #fff; font: bold 13px/20px "Open Sans", sans-serif; letter-spacing: -.5px; text-align: center; }
.tab-title { position: relative; width: 126px; white-space: nowrap; line-height: 24px; -webkit-mask-image: linear-gradient(90deg, #000 80%, transparent); mask-image: linear-gradient(90deg, #000 80%, transparent); }
.whole { -webkit-mask-image: none; mask-image: none; }
.x { position: relative; width: 11px; height: 11px; margin-left: 10px; }
.newtab { width: 44px; height: 22px; margin: 8px 0 0 13px; }
.window-controls { margin-left: auto; display: flex; gap: 40px; padding: 8px 23px 0 0; }
.wc { width: 18px; height: 18px; }
.wc:first-child { margin: -3px 4px 0 0; }

/* address bar */
.browser-bar { height: 46px; background: #f2f2f2; border-bottom: 1px solid #b0b0b0; display: flex; align-items: center; padding-left: 11px; flex: none; }
.nav { width: 24px; height: 24px; margin-right: 11px; }
.omnibox { width: 1679px; height: 35px; border: 1px solid #a9a9a9; border-radius: 3px; background: #fff; display: flex; align-items: center; padding: 0 4px 0 11px; margin-left: -1px; }
.lock { width: 12px; height: 16px; margin-right: 10px; }
.secure { color: #188038; font-size: 17px; width: 46px; margin-top: -2px; }
.omni-sep { width: 1px; height: 20px; background: #999; margin-right: 9px; }
.url { font-size: 17.740px; color: #808080; white-space: nowrap; flex: 1; margin-top: -2px; }
.url b { font-weight: 400; }
.scheme { color: #188038; }
.host { color: #111; }
.star { width: 22px; height: 22px; }
.ext { width: 22px; height: 22px; margin-left: 12px; }
.second { margin-left: 18px; }
.dots { width: 6px; height: 18px; margin-left: 27px; fill: #555; }

/* document header */
.doc-header { height: 50px; background: #f8f8f8; display: flex; align-items: center; padding-left: 6px; flex: none; }
.logo { width: 100px; height: 46px; font: bold 27px "Open Sans", sans-serif; fill: #1b5faa; stroke: #1b5faa; stroke-width: .4px; }
.burger { width: 22px; height: 20px; margin: 3px 0 0 15px; }
.versions { width: 26px; height: 24px; margin: 3px 0 0 13px; }
.mark { width: 22px; height: 24px; margin: 3px 0 0 14px; }
h1 { margin: 4px 0 0 22px; font-size: 28.100px; font-weight: 300; color: #222; line-height: 40px; width: 280px; white-space: nowrap; }
.workspace { font-size: 18.500px; color: #808080; width: 88px; margin-top: 5px; }
.edu { width: 26px; height: 26px; }
.globe { width: 24px; height: 24px; margin: 1px 26px 0 7px; }
.stat { display: flex; align-items: center; gap: 9px; width: 64px; font-size: 17px; margin-top: 1px; }
.link { width: 55px; gap: 10px; }
.i24 { width: 24px; height: 24px; }
.i18 { width: 18px; height: 18px; }
.i22 { width: 22px; height: 24px; }
.header-right { margin-left: auto; display: flex; align-items: center; }
.bubble { width: 26px; height: 24px; margin: 4px 11px 0 0; }
.btn { height: 42px; margin: 0 10px 0 0; padding: 0; border: 1px solid #ccc; border-radius: 4px; background: #fff; color: #333; font: 300 17.500px "Noto Sans CJK TC", sans-serif; }
.store { width: 138px; }
.learn { width: 102px; }
.share { width: 65px; height: 40px; border: 0; background: #1b5faa; color: #fff; margin-right: 13px; }
.help { width: 23px; height: 24px; margin-top: 4px; }
.caret { border: 5px solid transparent; border-top-color: #333; border-bottom: 0; margin-left: 6px; margin-top: 4px; }
.avatar { width: 30px; height: 30px; margin: 3px 4px 0 11px; }
.user { font-size: 17.500px; font-weight: 300; width: 57px; white-space: nowrap; word-spacing: -1.500px; margin-top: 1px; }
.user + .caret { margin: 4px 6px 0 4px; }

/* mate toolbar */
.toolbar { height: 48px; display: flex; align-items: center; padding: 0 0 3px 8px; flex: none; color: #333; }
.tool { width: 28px; height: 28px; margin: 0 7.400px; }
.undo { margin: 0 7px 0 0; }
.redo { margin: 0 10px 0 7px; }
.sep { width: 2px; height: 32px; background: #dcdcdc; flex: none; }
.insert { display: flex; align-items: center; font-size: 17.500px; font-weight: 300; width: 91px; padding-left: 8px; gap: 4px; }
.insert svg { width: 28px; height: 28px; }
.clock { margin: 0 9px; }
.group { display: flex; }
.first .tool { margin: 0 7.250px; }
.tangent { margin: 0 10px; }
.second-group { padding-left: 1px; }
.second-group .tool { margin: 0 7.200px; }
.four { padding-left: 2.500px; }
.four .tool { margin: 0 7.300px; }
.last { margin: 0 5px 0 9.800px; }

/* model area */
.workspace-area { position: relative; display: flex; height: 862px; flex: none; }
.panel { position: relative; width: 250px; height: 795px; margin-top: 2px; background: #fff; box-shadow: 2px 2px 6px rgba(0,0,0,.3); padding-top: 2px; flex: none; font-size: 15px; color: #444; z-index: 1; }
.row { height: 32.600px; display: flex; align-items: center; }
.heading { padding-left: 13px; gap: 5px; }
.lvl2 { padding-left: 42px; }
.origin { width: 10px; height: 10px; margin-right: 10px; }
.lvl1 { padding-left: 15px; }
.chev { width: 10px; height: 14px; margin-right: 12px; }
.node { width: 20px; height: 20px; margin-right: 5px; }
.lvl1 span { letter-spacing: .2px; }
.lvl1 .asm { letter-spacing: .75px; }
.group-row .asm { letter-spacing: .6px; }
.group-row { padding-left: 13px; }
.down { width: 14px; height: 10px; margin-right: 11px; }
.mate { padding-left: 31px; color: #a5a5a5; }
.mate .chev { margin-right: 6px; }
.mate-icon { width: 26px; height: 26px; color: #999; margin-right: 4px; }
.scroll { position: absolute; left: 238px; top: 36px; width: 8px; height: 752px; background: #f3f6fa; }
.scene { width: 1670px; height: 862px; }
.edges { stroke: #171206; stroke-width: 3.500px; stroke-linejoin: round; }
.orange { stroke: #250b03; stroke-width: 4px; }
.face { font: 500 36px "Noto Sans CJK TC", sans-serif; fill: #222; }
.axis { font: bold 40px "Open Sans", sans-serif; }
.z { fill: #5050e8; } .ya { fill: #2eb035; } .xa { fill: #ee5652; }
.face, .axis { stroke: none; }
.side-tab { position: absolute; right: -1px; top: 386px; width: 42px; height: 42px; border: 1px solid #c8c8c8; background: #fff; padding: 0 0 0 9px; }
.side-tab svg { width: 23px; height: 23px; }

/* document tabs */
.doc-tabs { height: 38px; background: #c9c9c9; border-bottom: 2px solid #000; display: flex; flex: none; gap: 2px; }
.tab-tools { width: 93px; background: #d0d0d0; display: flex; align-items: center; gap: 23px; padding-left: 10px; }
.tab-tools svg { width: 23px; height: 23px; }
.doc-tab { width: 172.200px; height: 34px; border-radius: 0 0 6px 6px; background: #e8e8e8; color: #666; font-size: 17.500px; font-weight: 300; display: flex; align-items: center; padding: 0 0 2px 13px; gap: 4px; flex: none; white-space: nowrap; }
.doc-tab svg { width: 24px; height: 24px; }
.current { width: 136px; background: #fff; border-bottom: 3px solid #1b5faa; color: #333; padding: 2px 0 0 13px; }
.base { width: 167px; }
.sk { width: 155px; }
```
